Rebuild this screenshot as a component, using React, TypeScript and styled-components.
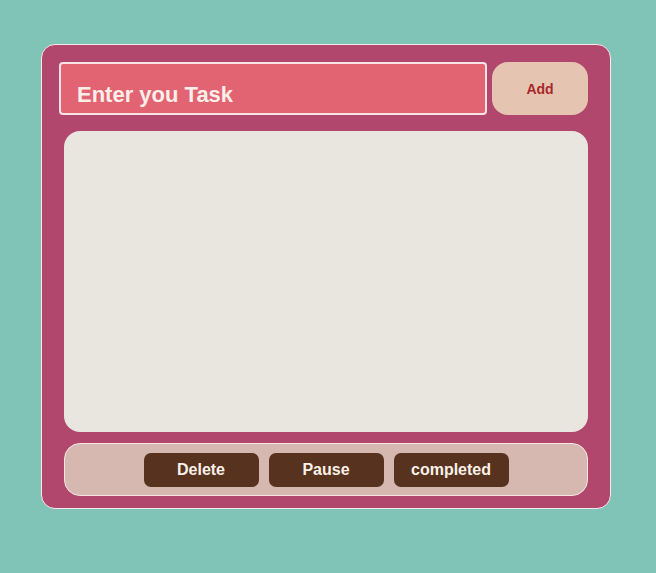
import styled, { createGlobalStyle } from 'styled-components'

const GlobalStyle = createGlobalStyle`
    html, body {
        margin: 0;
        padding: 0;
        background: #80c4b7;
        font-family: "Comic Sans MS", "Liberation Sans", Arial, sans-serif;
    }
    * {
        box-sizing: border-box;
    }
`;

const actions = ['Delete', 'Pause', 'completed']

function App() {
    return (
        <>
            <GlobalStyle />
            <Page>
                <Card>
                    <Header>
                        <TaskInput placeholder="Enter you Task" />
                        <AddButton>Add</AddButton>
                    </Header>
                    <TaskList />
                    <Footer>
                        {actions.map((label) => (
                            <ActionButton key={label}>{label}</ActionButton>
                        ))}
                    </Footer>
                </Card>
            </Page>
        </>
    )
}

export default App

const Page = styled.div`
    min-height: 573px;
    padding: 44px 0 0 41px;
`;

const Card = styled.div`
    width: 570px;
    height: 465px;
    display: flex;
    flex-direction: column;
    padding: 17px 22px 12px 17px;
    background: #b1476d;
    border: 1px solid #f6e9ea;
    border-radius: 14px;
`;

const Header = styled.div`
    display: flex;
    gap: 5px;
    height: 53px;
`;

const TaskInput = styled.input`
    width: 428px;
    height: 53px;
    padding: 12px 0 0 16px;
    background: #e26473;
    border: 2px solid #f7e3e3;
    border-radius: 4px;
    outline: none;
    font-family: inherit;
    font-size: 22px;
    font-weight: 700;
    color: #fcefe9;
    &::placeholder {
        color: #fcefe9;
        opacity: 1;
    }
`;

const AddButton = styled.button`
    width: 96px;
    height: 53px;
    background: #e6c4b2;
    border: none;
    border-radius: 16px;
    font-family: inherit;
    font-size: 14px;
    font-weight: 700;
    color: #a8282a;
    cursor: pointer;
`;

const TaskList = styled.div`
    height: 301px;
    margin: 16px 0 0 5px;
    background: #e9e6e0;
    border-radius: 16px;
`;

const Footer = styled.div`
    height: 53px;
    margin: 11px 0 0 5px;
    display: flex;
    align-items: center;
    justify-content: center;
    gap: 10px;
    background: #d7b8b1;
    border: 1.5px solid #f6e6e4;
    border-radius: 16px;
`;

const ActionButton = styled.button`
    width: 115px;
    height: 34px;
    padding-top: 2px;
    background: #56321f;
    border: none;
    border-radius: 7px;
    font-family: inherit;
    font-size: 16px;
    font-weight: 700;
    color: #fbf1e8;
    cursor: pointer;
`;
